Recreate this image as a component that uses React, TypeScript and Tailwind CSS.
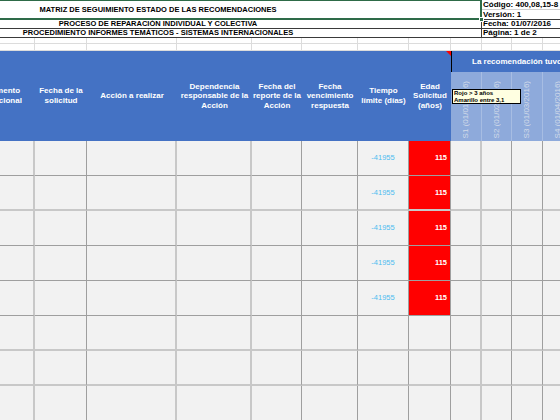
import React from "react";

// widths: first column is partly scrolled off to the left
const GRID = "grid grid-cols-[76px_52px_90px_75px_50px_56px_51px_42px_31px_30px_31px_30px]";

const vLines = [
  "border-r-2 border-r-[#c8c8c8]",
  "border-r border-r-[#9f9f9f]",
  "border-r-2 border-r-[#c8c8c8]",
  "border-r-2 border-r-[#c8c8c8]",
  "border-r border-r-[#9f9f9f]",
  "border-r border-r-[#9f9f9f]",
  "border-r border-r-[#9f9f9f]",
  "border-r border-r-[#9f9f9f]",
  "border-r-2 border-r-[#c8c8c8]",
  "border-r border-r-[#9f9f9f]",
  "border-r border-r-[#9f9f9f]",
  "border-r border-r-[#9f9f9f]",
];

const hLines = [
  "border-b border-b-[#9f9f9f]",
  "border-b-2 border-b-[#c8c8c8]",
  "border-b border-b-[#9f9f9f]",
  "border-b border-b-[#9f9f9f]",
  "border-b border-b-[#9f9f9f]",
  "border-b-2 border-b-[#c8c8c8]",
  "border-b-2 border-b-[#c8c8c8]",
  "border-b border-b-[#9f9f9f]",
];

const headers = [
  ["Instrumento", "Internacional"],
  ["Fecha de la", "solicitud"],
  ["Acción a realizar"],
  ["Dependencia", "responsable de la", "Acción"],
  ["Fecha del", "reporte de la", "Acción"],
  ["Fecha", "vencimiento", "respuesta"],
  ["Tiempo", "límite (días)"],
  ["Edad", "Solicitud", "(años)"],
];

const periods = ["S1 (01/01/2016)", "S2 (01/02/2016)", "S3 (01/03/2016)", "S4 (01/04/2016)"];

export default function App() {
  const rows = Array.from({ length: 8 }, (_, i) => i);

  return (
    <div className="relative w-[560px] h-[420px] overflow-hidden bg-white font-['Liberation_Sans',Arial,sans-serif] text-black">
      {/* document title block */}
      <div className="flex h-[38px]">
        <div className="w-[482px] flex flex-col font-bold text-[7.5px] leading-none">
          <div className="relative h-[20px] border-t border-b-2 border-r-2 border-[#2e6b48] flex items-center">
            <div className="w-[316px] text-center whitespace-nowrap">MATRIZ DE SEGUIMIENTO ESTADO DE LAS RECOMENDACIONES</div>
            <span className="absolute -right-[4px] -bottom-[4px] w-[5px] h-[5px] bg-[#2e6b48] border border-white" />
          </div>
          <div className="h-[9px] border-b border-r border-[#3a3a3a] flex items-center">
            <div className="w-[316px] text-center whitespace-nowrap">PROCESO DE REPARACIÓN INDIVIDUAL Y COLECTIVA</div>
          </div>
          <div className="h-[9px] border-b border-r border-[#3a3a3a] flex items-center">
            <div className="w-[316px] text-center whitespace-nowrap">PROCEDIMIENTO INFORMES TEMÁTICOS - SISTEMAS INTERNACIONALES</div>
          </div>
        </div>
        <div className="flex-1 flex flex-col font-bold text-[8px] leading-none whitespace-nowrap">
          <div className="h-[10px] border-b border-[#cfcfcf] flex items-center pl-[1px]">Código: 400,08,15-8</div>
          <div className="h-[10px] border-b border-[#3a3a3a] flex items-center pl-[1px]">Versión: 1</div>
          <div className="h-[9px] border-b border-[#3a3a3a] flex items-center pl-[1px]">Fecha: 01/07/2016</div>
          <div className="h-[9px] border-b border-[#3a3a3a] flex items-center pl-[1px]">Página: 1 de 2</div>
        </div>
      </div>

      <div className="-ml-[41px] w-[614px]">
        {/* empty spacer rows */}
        {["h-[6px]", "h-[7px]"].map((h, r) => (
          <div key={r} className={`${GRID} ${h} border-b border-[#dcdcdc]`}>
            {vLines.map((_, c) => (
              <div key={c} className="border-r border-[#dcdcdc]" />
            ))}
          </div>
        ))}

        {/* blue header */}
        <div className="flex h-[90px]">
          <div className="grid grid-cols-[76px_52px_90px_75px_50px_56px_51px_42px] w-[492px] bg-[#4472c4] text-white font-bold text-[8px] leading-[9.6px]">
            {headers.map((lines, i) => (
              <div key={i} className="relative flex items-center justify-center text-center whitespace-nowrap">
                <div>
                  {lines.map((l, j) => (
                    <div key={j}>{l}</div>
                  ))}
                </div>
                {i === 7 && (
                  <span className="absolute top-0 right-0 w-0 h-0 border-t-[5px] border-l-[5px] border-t-[#ff0000] border-l-transparent" />
                )}
              </div>
            ))}
          </div>
          <div className="w-[122px] flex flex-col">
            <div className="h-[21px] bg-[#4472c4] border-l border-black text-white font-bold text-[8px] flex items-center pl-[20px] whitespace-nowrap">
              La recomendación tuvo seguimiento en:
            </div>
            <div className="flex-1 grid grid-cols-[31px_30px_31px_30px] bg-[#8eaadb]">
              {periods.map((p) => (
                <div key={p} className="flex items-end justify-center pb-[3px] border-r border-[#a7bde3]">
                  <span className="[writing-mode:vertical-rl] rotate-180 text-[8px] leading-none text-[#d3dbe9] whitespace-nowrap">{p}</span>
                </div>
              ))}
            </div>
          </div>
        </div>

        {/* data rows */}
        {rows.map((r) => (
          <div key={r} className={`${GRID} h-[35px]`}>
            {vLines.map((v, c) => {
              const filled = r < 5;
              const red = filled && c === 7;
              return (
                <div
                  key={c}
                  className={`${v} ${hLines[r]} flex items-center ${red ? "bg-[#ff0000] justify-end pr-[3px]" : "bg-[#f2f2f2] justify-center"}`}
                >
                  {filled && c === 6 && <span className="text-[7.5px] text-[#4fbdf0]">-41955</span>}
                  {red && <span className="text-[7.5px] font-bold text-white">115</span>}
                </div>
              );
            })}
          </div>
        ))}
      </div>

      {/* comment note */}
      <div className="absolute left-[452px] top-[89px] w-[69px] h-[15px] bg-[#ffffe1] border border-black px-[1px] text-[6px] leading-[6.5px] font-bold whitespace-nowrap overflow-hidden">
        <div>Rojo &gt; 3 años</div>
        <div>Amarillo entre 3,1</div>
      </div>
    </div>
  );
}
